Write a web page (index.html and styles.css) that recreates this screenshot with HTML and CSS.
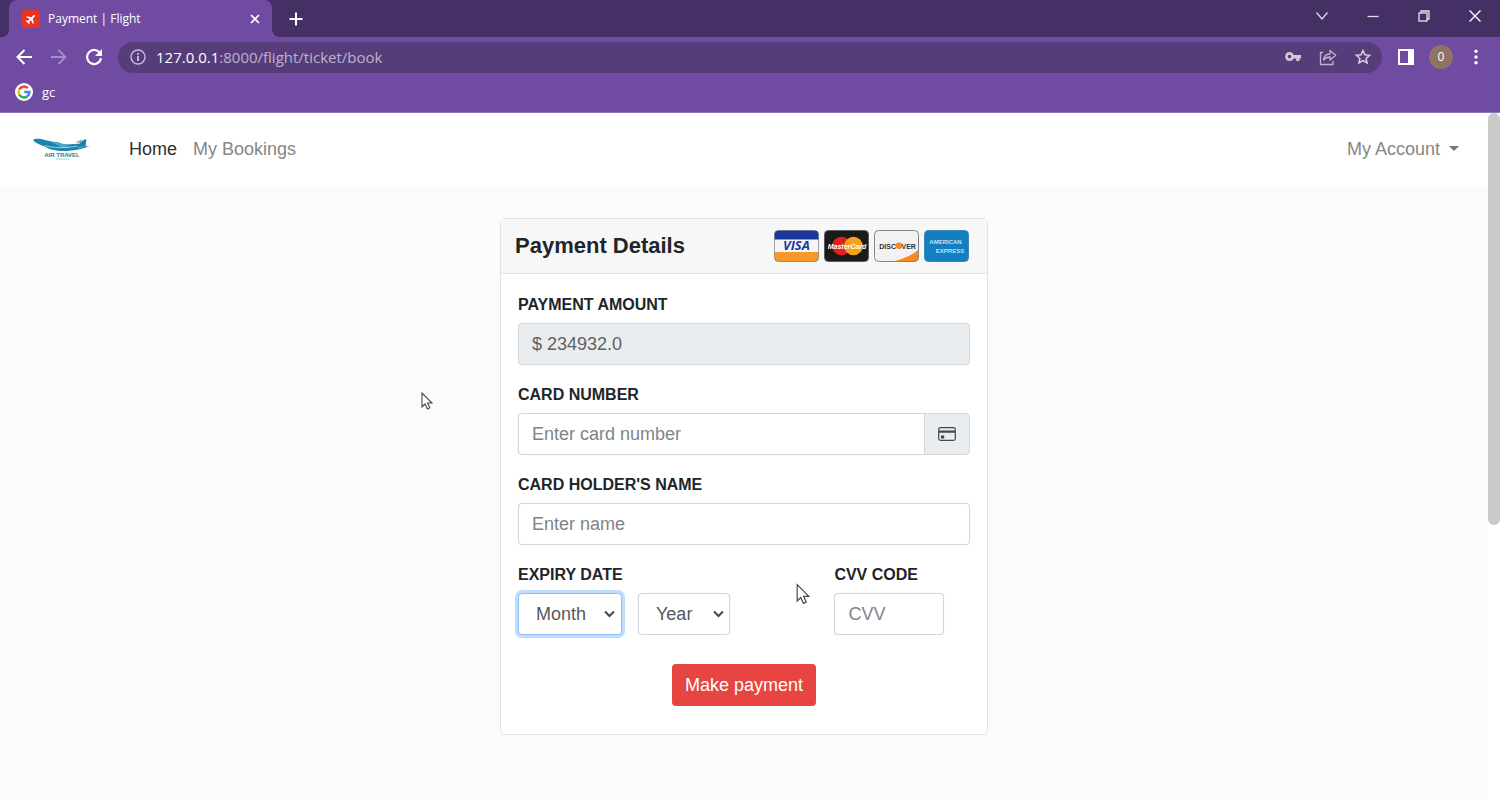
FILE: index.html
```html
<!DOCTYPE html>
<html lang="en">
<head>
<meta charset="utf-8">
<title>Payment | Flight</title>
<link rel="stylesheet" href="styles.css">
</head>
<body>
<header class="browser">
  <div class="tabstrip">
    <div class="tab">
      <svg class="favicon" width="18" height="18" viewBox="0 0 18 18"><rect width="18" height="18" rx="2" fill="#ea3323"/><path transform="translate(9 9) rotate(45) scale(.6)" fill="#fff" d="M0-9C1-9 1.5-8 1.5-7v4.500L8 1.500v2L1.500 1.500v4L4 7.500V9L0 8l-4 1V7.500l2.500-2v-4L-8 3.500v-2l6.500-4V-7c0-1 .5-2 1.500-2z"/></svg>
      <span class="tab-title">Payment | Flight</span>
      <button class="icon-btn tab-close" aria-label="Close tab"><svg width="10" height="10" viewBox="0 0 10 10" stroke="#fff" stroke-width="1.700"><path d="M1 1l8 8M9 1l-8 8"/></svg></button>
    </div>
    <button class="icon-btn new-tab" aria-label="New tab"><svg width="14" height="14" viewBox="0 0 14 14" stroke="#fff" stroke-width="2"><path d="M7 0.500v13M.5 7h13"/></svg></button>
    <div class="window-controls">
      <button class="icon-btn" aria-label="Search tabs"><svg width="12" height="12" viewBox="0 0 12 12" fill="none" stroke="#ddd5e8" stroke-width="1.300"><path d="M.5 2.500L6 9l5.500-6.500"/></svg></button>
      <button class="icon-btn" aria-label="Minimize"><svg width="12" height="12" viewBox="0 0 12 12" stroke="#e3dcec" stroke-width="1.300"><path d="M.5 6.500h11"/></svg></button>
      <button class="icon-btn" aria-label="Restore"><svg width="12" height="12" viewBox="0 0 12 12" fill="none" stroke="#e9e3f0" stroke-width="1.300"><rect x="1" y="3" width="8" height="8"/><path d="M3 3V1h8v8H9"/></svg></button>
      <button class="icon-btn" aria-label="Close window"><svg width="12" height="12" viewBox="0 0 12 12" stroke="#f1edf5" stroke-width="1.500"><path d="M.5 .5l11 11M11.500 .5l-11 11"/></svg></button>
    </div>
  </div>
  <div class="toolbar">
    <button class="icon-btn" aria-label="Back"><svg width="18" height="18" viewBox="0 0 18 18" fill="none" stroke="#fff" stroke-width="2"><path d="M17 9H2.500M9.500 2L2.500 9l7 7"/></svg></button>
    <button class="icon-btn" aria-label="Forward"><svg width="18" height="18" viewBox="0 0 18 18" fill="none" stroke="#a78cc8" stroke-width="1.800"><path d="M1 9h14.500M8.500 2l7 7-7 7"/></svg></button>
    <button class="icon-btn" aria-label="Reload"><svg width="18" height="18" viewBox="0 0 18 18"><path d="M15.200 5.500A7 7 0 1 0 16 10.300" fill="none" stroke="#fff" stroke-width="2.200"/><path d="M17 1v7h-7z" fill="#fff"/></svg></button>
    <div class="omnibox">
      <svg width="16" height="16" viewBox="0 0 16 16" fill="none" stroke="#c9bbd8" stroke-width="1.400"><circle cx="8" cy="8" r="7"/><path d="M8 7v5M8 4v1.700" stroke-width="1.900"/></svg>
      <span class="url"><b>127.0.0.1</b>:8000/flight/ticket/book</span>
      <div class="omni-actions">
        <button class="icon-btn" aria-label="Passwords"><svg width="18" height="18" viewBox="0 0 18 18"><path fill="#d0c7da" fill-rule="evenodd" d="M5.500 4a4.500 4.500 0 0 1 4.200 3H17v3.500h-1.500V13h-3.300v-2.500H9.700A4.500 4.500 0 1 1 5.500 4zm0 2.800a1.800 1.800 0 1 0 0 3.600 1.800 1.800 0 0 0 0-3.600z"/></svg></button>
        <button class="icon-btn" aria-label="Share"><svg width="18" height="18" viewBox="0 0 18 18" fill="none" stroke="#c2b3d2" stroke-width="1.300"><path d="M4 4.500H1.500v12h12.500V13"/><path stroke-linejoin="round" d="M4.500 12C5 8 7.500 6 11 6V2.500l5.700 4.800L11 12V9C8 9 6 10 4.500 12z"/></svg></button>
        <button class="icon-btn" aria-label="Bookmark"><svg width="18" height="18" viewBox="0 0 18 18" fill="none" stroke="#d8cfe2" stroke-width="1.500"><path d="M9 2.500l1.900 4.300 4.700.5-3.500 3.100 1 4.600L9 12.600 4.900 15l1-4.600-3.500-3.100 4.700-.5z"/></svg></button>
      </div>
    </div>
    <button class="icon-btn" aria-label="Side panel"><svg width="16" height="16" viewBox="0 0 16 16"><path fill="#fff" fill-rule="evenodd" d="M0 0h16v16H0zM2 2v12h8V2z"/></svg></button>
    <button class="avatar" aria-label="Profile">0</button>
    <button class="icon-btn menu-btn" aria-label="Menu"><svg width="4" height="16" viewBox="0 0 4 16" fill="#fff"><circle cx="2" cy="2.300" r="1.700"/><circle cx="2" cy="8" r="1.700"/><circle cx="2" cy="13.700" r="1.700"/></svg></button>
  </div>
  <div class="bookmarks">
    <a class="bookmark" href="#"><svg width="18" height="18" viewBox="0 0 18 18"><circle cx="9" cy="9" r="9" fill="#fff"/><g fill="none" stroke-width="2.500"><path stroke="#ea4335" d="M4.200 6.500A5.400 5.400 0 0 1 12.800 5.200"/><path stroke="#fbbc05" d="M4.200 6.500a5.400 5.400 0 0 0 0 5"/><path stroke="#34a853" d="M4.200 11.500a5.400 5.400 0 0 0 8.200 1.700"/><path stroke="#4285f4" d="M12.400 13.200A5.400 5.400 0 0 0 14.400 9H9.300"/></g></svg><span>gc</span></a>
  </div>
</header>

<div class="viewport">
  <div class="page">
    <nav class="navbar">
      <a class="brand" href="#" aria-label="Air Travel"><svg width="58" height="24" viewBox="0 0 58 24"><path fill="#1b83ad" d="M0 3C2 1 7 1.500 12 3l11 2.500 10 2 13-.8 5-4.200h2.500l-.8 6 2 1.200c-6 2.800-14 4-22 4.200-10 .2-16-1.500-21-4.500C6 7.500 2 6 0 3z"/><path fill="#4ea5c6" d="M17 4.500l8 .5 12 5-7 1zM42 5.500l7-3-1 3zM44 10l14-1-12 2.500z"/><path d="M12 8.500c8 2.500 20 3 32 .5" fill="none" stroke="#d5ebf3" stroke-width=".7"/><text x="29" y="20" text-anchor="middle" class="brand-name">AIR TRAVEL</text><path d="M23 22h13" stroke="#a9cfdc" stroke-width="1"/></svg></a>
      <a class="nav-link nav-active" href="#">Home</a>
      <a class="nav-link" href="#">My Bookings</a>
      <button class="nav-link account">My Account <i class="caret"></i></button>
    </nav>

    <main class="content">
      <form class="card">
        <div class="card-header">
          <h1>Payment Details</h1>
          <div class="card-brands">
            <svg width="45" height="32" viewBox="0 0 45 32"><clipPath id="cv"><rect x=".5" y=".5" width="44" height="31" rx="4"/></clipPath><g clip-path="url(#cv)"><path fill="#f6f6f6" d="M0 0h45v32H0z"/><path fill="#17389a" d="M0 0h45v9.500H0z"/><path fill="#f7982a" d="M0 22h45v10H0z"/></g><text x="22.500" y="20" text-anchor="middle" class="visa">VISA</text><rect x=".5" y=".5" width="44" height="31" rx="4" fill="none" stroke="#5b5b6b" stroke-opacity=".55"/></svg>
            <svg width="45" height="32" viewBox="0 0 45 32"><rect x=".5" y=".5" width="44" height="31" rx="4" fill="#1b1a19" stroke="#5d5d5d"/><circle cx="17.500" cy="16" r="9.300" fill="#e2211d"/><circle cx="29.500" cy="16" r="9.300" fill="#f6a01c"/><text x="23" y="19" text-anchor="middle" class="mastercard">MasterCard</text></svg>
            <svg width="45" height="32" viewBox="0 0 45 32"><clipPath id="cd"><rect x=".5" y=".5" width="44" height="31" rx="4"/></clipPath><g clip-path="url(#cd)"><path fill="#f2f2f2" d="M0 0h45v32H0z"/><path fill="#f7891d" d="M16 32Q36 28 45 19v13z"/></g><circle cx="25" cy="15.700" r="3.200" fill="#f7891d"/><text x="22" y="18.500" text-anchor="end" class="discover">DISC</text><text x="27.500" y="18.500" class="discover">VER</text><rect x=".5" y=".5" width="44" height="31" rx="4" fill="none" stroke="#858585"/></svg>
            <svg width="45" height="32" viewBox="0 0 45 32"><rect x=".5" y=".5" width="44" height="31" rx="4" fill="#147fc0" stroke="#3f86ae"/><text x="21.500" y="14" text-anchor="middle" class="amex">AMERICAN</text><text x="26" y="22.500" text-anchor="middle" class="amex">EXPRESS</text></svg>
          </div>
        </div>
        <div class="card-body">
          <div class="field">
            <label for="amount">PAYMENT AMOUNT</label>
            <input class="control" id="amount" type="text" value="$ 234932.0" readonly>
          </div>
          <div class="field">
            <label for="number">CARD NUMBER</label>
            <div class="input-group">
              <input class="control" id="number" type="text" placeholder="Enter card number">
              <span class="addon"><svg width="18" height="14" viewBox="0 0 18 14"><rect x=".7" y=".7" width="16.600" height="12.600" rx="1.800" fill="none" stroke="#43494e" stroke-width="1.200"/><path fill="#43494e" d="M1 3.500h16v2.300H1zM3 8.500h3.200v3H3z"/></svg></span>
            </div>
          </div>
          <div class="field">
            <label for="holder">CARD HOLDER'S NAME</label>
            <input class="control" id="holder" type="text" placeholder="Enter name">
          </div>
          <div class="field-row">
            <div class="field">
              <label for="month">EXPIRY DATE</label>
              <div class="selects">
                <select class="control month focused" id="month"><option>Month</option></select>
                <select class="control year" aria-label="Expiry year"><option>Year</option></select>
              </div>
            </div>
            <div class="field">
              <label for="cvv">CVV CODE</label>
              <input class="control cvv" id="cvv" type="text" placeholder="CVV">
            </div>
          </div>
          <button class="pay" type="button">Make payment</button>
        </div>
      </form>
    </main>
  </div>
  <div class="scrollbar"><div class="thumb"></div></div>
</div>

<svg class="pointer pointer-left" width="12" height="18" viewBox="0 0 12 18"><path d="M1 1v14l3-3 2.500 5 2.300-1.200L6.500 11H11z" fill="#fff" stroke="#45434d" stroke-width="1.100"/></svg>
<svg class="pointer pointer-right" width="14" height="22" viewBox="0 0 12 18"><path d="M1 1v14l3-3 2.500 5 2.300-1.200L6.500 11H11z" fill="#fff" stroke="#45434d" stroke-width="1"/></svg>
</body>
</html>
```

FILE: styles.css
```css
* { box-sizing: border-box; }
body {
  margin: 0;
  height: 100vh;
  display: flex;
  flex-direction: column;
  overflow: hidden;
  position: relative;
  font: 18px/24px "Liberation Sans", Arial, sans-serif;
  color: #212529;
}
button { font: inherit; border: 0; background: none; padding: 0; color: inherit; }
a { text-decoration: none; color: inherit; }
svg { display: block; flex: none; }

.browser { background: #704ba2; color: #fff; font-family: "Open Sans", "Noto Sans", sans-serif; border-bottom: 1px solid #8d70b6; }
.icon-btn { display: flex; align-items: center; justify-content: center; }
.tabstrip { display: flex; height: 37px; background: #453065; padding-left: 9px; }
.tab { position: relative; display: flex; align-items: center; width: 263px; background: #704ba2; border-radius: 8px 8px 0 0; padding: 0 12px 0 13px; }
.tab::before, .tab::after { content: ""; position: absolute; bottom: 0; width: 8px; height: 8px; }
.tab::before { left: -8px; background: radial-gradient(circle at 0 0, #453065 8px, #704ba2 8px); }
.tab::after { right: -8px; background: radial-gradient(circle at 100% 0, #453065 8px, #704ba2 8px); }
.tab-title { font-size: 12px; line-height: 18px; margin-left: 8px; flex: 1; }
.new-tab { width: 48px; }
.window-controls { display: flex; margin-left: auto; height: 32px; }
.window-controls .icon-btn { width: 51px; }

.toolbar { display: flex; align-items: center; height: 40px; padding: 0 22px 0 15px; gap: 17px; }
.omnibox { flex: 1; display: flex; align-items: center; height: 31px; border-radius: 16px; background: #563d7a; padding: 0 10px 0 12px; margin-left: -2px; margin-right: -1px; }
.url { font-size: 15px; margin-left: 10px; color: #bfb0d0; }
.url b { font-weight: 400; color: #fff; }
.omni-actions { display: flex; gap: 17px; margin-left: auto; }
.avatar { width: 24px; height: 24px; border-radius: 50%; background: #917365; font-size: 12px; line-height: 24px; margin-left: -2px; }
.menu-btn { margin-left: 4px; }
.bookmarks { display: flex; align-items: center; height: 35px; padding: 0 15px 5px; }
.bookmark { display: flex; align-items: center; gap: 9px; font-size: 13px; line-height: 18px; }

.viewport { flex: 1; display: flex; min-height: 0; background: #fff; }
.page { flex: 1; background: #fbfbfb; overflow: hidden; }
.scrollbar { width: 12px; background: #fff; }
.thumb { height: 60%; border-radius: 6px; background: #c9c9c9; }
.navbar { display: flex; align-items: center; height: 73px; padding: 0 29px 2px 33px; background: #fff; }
.brand { margin-right: 38px; }
.brand-name { font: bold 6px "Liberation Sans", sans-serif; fill: #1681a8; }
.nav-link { color: #868686; margin-right: 16px; }
.nav-active { color: #303030; }
.account { display: flex; align-items: center; gap: 9px; margin: 0 0 0 auto; }
.caret { border: 5px solid transparent; border-top-color: #777; border-bottom: 0; }

.content { display: flex; justify-content: center; padding: 32px 16px; }
.card { width: 488px; background: #fff; border: 1px solid #e1e2e3; border-radius: 5px; }
.card-header { display: flex; align-items: center; justify-content: space-between; height: 55px; padding: 0 18px 0 14px; background: #f7f7f7; border-bottom: 1px solid #e1e2e3; border-radius: 4px 4px 0 0; }
.card-header h1 { margin: 0; font-size: 22px; line-height: 28px; }
.card-brands { display: flex; gap: 5px; }
.visa { font: italic bold 13px "Open Sans", sans-serif; fill: #20399b; }
.mastercard { font: italic bold 7px "Liberation Sans", sans-serif; fill: #fff; }
.discover { font: bold 7px "Liberation Sans", sans-serif; fill: #333; }
.amex { font: bold 6px "Liberation Sans", sans-serif; fill: #c3e2f4; }

.card-body { display: flex; flex-direction: column; gap: 20px; padding: 21px 17px 28px; }
.field { display: flex; flex-direction: column; gap: 8px; }
label { font-size: 16px; font-weight: 700; line-height: 20px; }
.control { width: 100%; height: 42px; padding: 0 13px; border: 1px solid #d5d9dc; border-radius: 4px; background: #fff; font: inherit; color: #54595e; outline: 0; box-shadow: 0 0 1px #d5d9dc; }
.control::placeholder { color: #7d8489; opacity: 1; }
.control[readonly] { background: #e9edef; color: #5c6267; }
.input-group { display: flex; }
.input-group .control { flex: 1; min-width: 0; border-radius: 4px 0 0 4px; }
.addon { display: flex; align-items: center; justify-content: center; width: 46px; margin-left: -1px; border: 1px solid #d5d9dc; border-radius: 0 4px 4px 0; background: #e9edef; }
.field-row { display: grid; grid-template-columns: 7fr 3fr; }
.selects { display: flex; gap: 16px; }
select.control {
  appearance: none;
  padding: 0 24px 0 17px;
  background: #fff url("data:image/svg+xml,%3Csvg xmlns='http://www.w3.org/2000/svg' width='11' height='8' viewBox='0 0 11 8'%3E%3Cpath d='M1 1.500l4.500 4.500L10 1.500' fill='none' stroke='%23444a50' stroke-width='2'/%3E%3C/svg%3E") no-repeat right 6px center;
}
select.month { width: 104px; }
select.year { width: 92px; background-position: right 5px center; }
select.focused { border-color: #8fc1f5; box-shadow: 0 0 0 3px #bfdeff; }
.cvv { width: 110px; }
.pay { align-self: center; height: 42px; margin-top: 9px; padding: 0 13px; border-radius: 4px; background: #e64542; color: #fff; }

.pointer { position: absolute; }
.pointer-left { left: 421px; top: 392px; }
.pointer-right { left: 796px; top: 583px; }
```
